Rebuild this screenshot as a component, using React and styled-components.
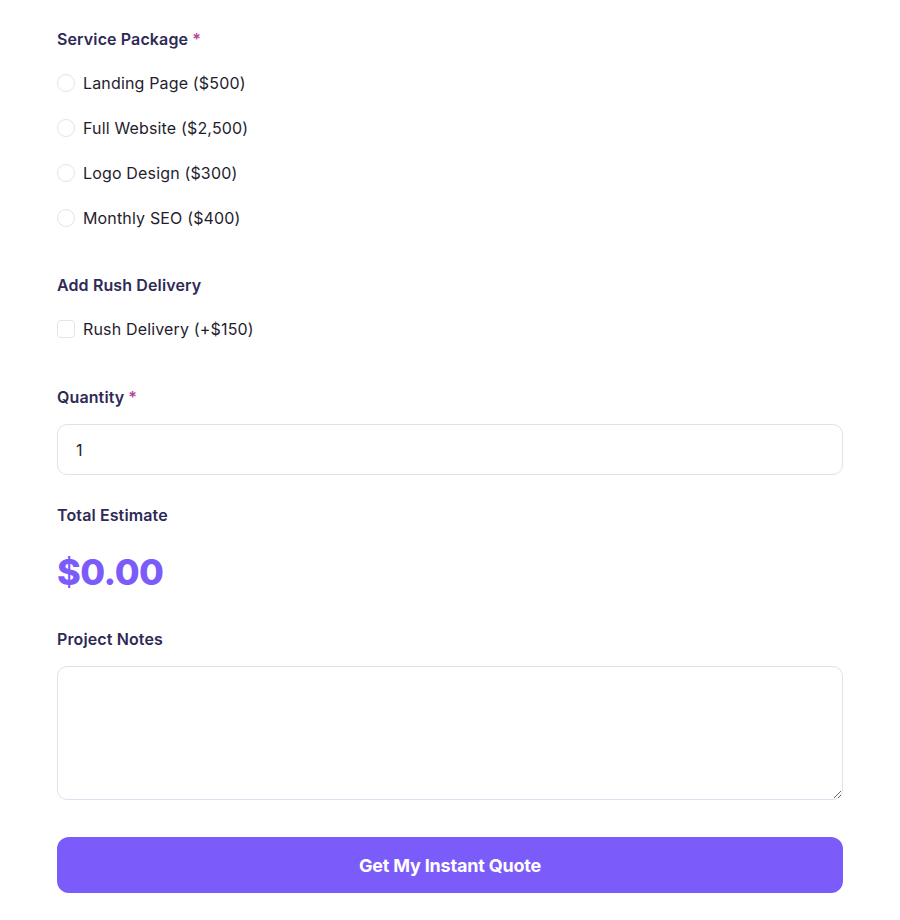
import React, { useState } from "react";
import styled, { createGlobalStyle } from "styled-components";

const GlobalStyle = createGlobalStyle`
    body {
        margin: 0;
        background: #ffffff;
        font-family: Inter, "Noto Sans", sans-serif;
    }
`;

const Form = styled.form`
    width: 786px;
    margin-left: 57px;
    padding-top: 27px;
    display: flex;
    flex-direction: column;
`;

const Section = styled.div`
    display: flex;
    flex-direction: column;
    margin-bottom: ${({ spacing }) => spacing}px;
`;

const Label = styled.div`
    font-size: 16px;
    line-height: 24px;
    font-weight: 600;
    letter-spacing: 0.12px;
    color: #2e2a56;
    margin-bottom: ${({ spacing }) => spacing}px;
`;

const Required = styled.span`
    color: #b8439a;
    margin-left: 4px;
`;

const OptionList = styled.div`
    display: flex;
    flex-direction: column;
    gap: 21px;
`;

const Option = styled.label`
    display: flex;
    align-items: center;
    gap: 8px;
    height: 24px;
    font-size: 16px;
    letter-spacing: 0.16px;
    color: #1f1d2e;
    cursor: pointer;
`;

const Mark = styled.span`
    width: 16px;
    height: 16px;
    border: 1px solid #e4e2ee;
    border-radius: ${({ round }) => (round ? "50%" : "4px")};
    background: ${({ checked }) => (checked ? "#7b5cfa" : "#fff")};
    box-sizing: content-box;
    flex-shrink: 0;
`;

const Input = styled.input`
    height: 51px;
    box-sizing: border-box;
    border: 1px solid #e2e0ee;
    border-radius: 10px;
    padding: 0 18px;
    font-family: inherit;
    font-size: 16px;
    color: #1f1d2e;
    outline: none;
`;

const Total = styled.div`
    font-size: 36px;
    line-height: 44px;
    font-weight: 800;
    color: #7b5cfa;
    letter-spacing: -0.5px;
`;

const TextArea = styled.textarea`
    height: 134px;
    box-sizing: border-box;
    border: 1px solid #e2e0ee;
    border-radius: 10px;
    padding: 14px 18px;
    font-family: inherit;
    font-size: 16px;
    outline: none;
    resize: vertical;
`;

const Button = styled.button`
    height: 56px;
    border: none;
    border-radius: 12px;
    background: #7b5cfa;
    color: #fff;
    font-family: inherit;
    font-size: 18px;
    font-weight: 700;
    letter-spacing: -0.2px;
    cursor: pointer;
`;

const packages = [
    { id: "landing", label: "Landing Page ($500)", price: 500 },
    { id: "full", label: "Full Website ($2,500)", price: 2500 },
    { id: "logo", label: "Logo Design ($300)", price: 300 },
    { id: "seo", label: "Monthly SEO ($400)", price: 400 },
];

const App = () => {
    const [selected, setSelected] = useState(null);
    const [rush, setRush] = useState(false);
    const [qty, setQty] = useState("1");

    const pkg = packages.find((p) => p.id === selected);
    const total = pkg ? (pkg.price + (rush ? 150 : 0)) * (Number(qty) || 0) : 0;

    return (
        <>
            <GlobalStyle />
            <Form onSubmit={(e) => e.preventDefault()}>
                <Section spacing={43}>
                    <Label spacing={20}>
                        Service Package<Required>*</Required>
                    </Label>
                    <OptionList>
                        {packages.map((p) => (
                            <Option key={p.id} onClick={() => setSelected(p.id)}>
                                <Mark round checked={selected === p.id} />
                                {p.label}
                            </Option>
                        ))}
                    </OptionList>
                </Section>
                <Section spacing={44}>
                    <Label spacing={20}>Add Rush Delivery</Label>
                    <Option onClick={() => setRush(!rush)}>
                        <Mark checked={rush} />
                        Rush Delivery (+$150)
                    </Option>
                </Section>
                <Section spacing={28}>
                    <Label spacing={15}>
                        Quantity<Required>*</Required>
                    </Label>
                    <Input value={qty} onChange={(e) => setQty(e.target.value)} />
                </Section>
                <Section spacing={33}>
                    <Label spacing={23}>Total Estimate</Label>
                    <Total>${total.toFixed(2)}</Total>
                </Section>
                <Section spacing={37}>
                    <Label spacing={15}>Project Notes</Label>
                    <TextArea />
                </Section>
                <Button type="submit">Get My Instant Quote</Button>
            </Form>
        </>
    );
};

export default App;
